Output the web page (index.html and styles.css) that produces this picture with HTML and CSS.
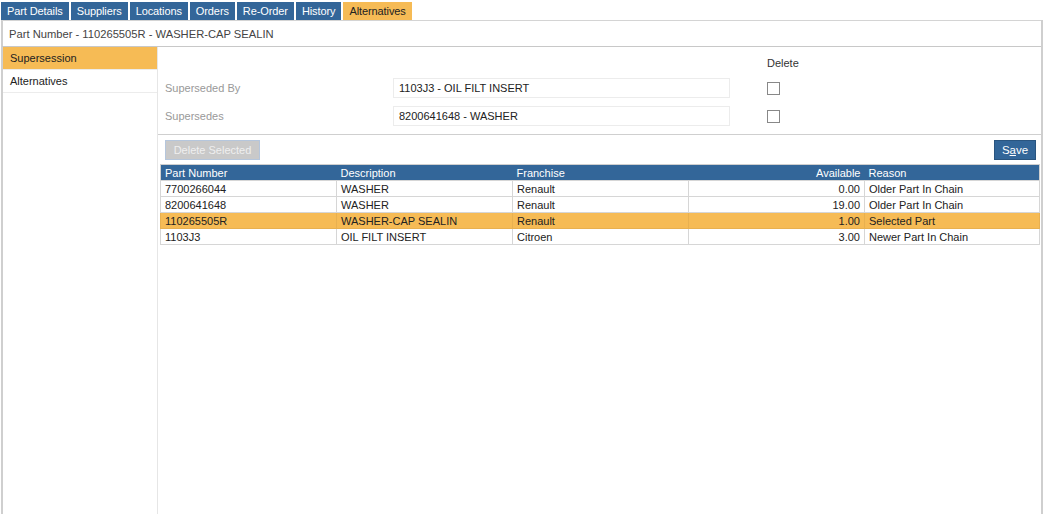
FILE: index.html
```html
<!DOCTYPE html>
<html lang="en">
<head>
  <meta charset="UTF-8" />
  <title>Part Alternatives</title>
  <link rel="stylesheet" href="styles.css">
</head>
<body>
  <div class="page">
    <ul class="tabs">
      <li class="tab">Part Details</li>
      <li class="tab">Suppliers</li>
      <li class="tab">Locations</li>
      <li class="tab">Orders</li>
      <li class="tab">Re-Order</li>
      <li class="tab">History</li>
      <li class="tab active">Alternatives</li>
    </ul>

    <div class="panel">
      <div class="title">Part Number - 110265505R - WASHER-CAP SEALIN</div>

      <div class="body">
        <ul class="side">
          <li class="side-item active">Supersession</li>
          <li class="side-item">Alternatives</li>
        </ul>

        <div class="content">
          <div class="form">
            <span></span>
            <span></span>
            <span class="head">Delete</span>

            <label class="label">Superseded By</label>
            <div class="field">1103J3 - OIL FILT INSERT</div>
            <span class="check"></span>

            <label class="label">Supersedes</label>
            <div class="field">8200641648 - WASHER</div>
            <span class="check"></span>
          </div>

          <div class="toolbar">
            <button class="btn disabled">Delete Selected</button>
            <button class="btn primary">S<u>a</u>ve</button>
          </div>

          <table class="grid">
            <thead>
              <tr>
                <th>Part Number</th>
                <th>Description</th>
                <th>Franchise</th>
                <th class="num">Available</th>
                <th>Reason</th>
              </tr>
            </thead>
            <tbody>
              <tr>
                <td>7700266044</td>
                <td>WASHER</td>
                <td>Renault</td>
                <td class="num">0.00</td>
                <td>Older Part In Chain</td>
              </tr>
              <tr>
                <td>8200641648</td>
                <td>WASHER</td>
                <td>Renault</td>
                <td class="num">19.00</td>
                <td>Older Part In Chain</td>
              </tr>
              <tr class="selected">
                <td>110265505R</td>
                <td>WASHER-CAP SEALIN</td>
                <td>Renault</td>
                <td class="num">1.00</td>
                <td>Selected Part</td>
              </tr>
              <tr>
                <td>1103J3</td>
                <td>OIL FILT INSERT</td>
                <td>Citroen</td>
                <td class="num">3.00</td>
                <td>Newer Part In Chain</td>
              </tr>
            </tbody>
          </table>
        </div>
      </div>
    </div>
  </div>
</body>
</html>
```

FILE: styles.css
```css
* {
  box-sizing: border-box;
  margin: 0;
  padding: 0;
}

html, body {
  height: 100%;
}

body {
  background: white;
  font-family: 'Liberation Sans', Arial, sans-serif;
  font-size: 11px;
  color: #222;
  overflow: hidden;
}

.page {
  display: flex;
  flex-direction: column;
  height: 100%;
  width: 1043px;
  padding: 2px 0 0 1px;
}

/* tabs */
.tabs {
  display: flex;
  list-style: none;
  gap: 2px;
}

.tab {
  height: 18px;
  line-height: 18px;
  padding: 0 6px;
  background: #336699;
  color: white;
  font-size: 11px;
  letter-spacing: -0.1px;
}

.tab.active {
  background: #f6bb55;
  color: #222;
}

/* panel */
.panel {
  flex: 1;
  display: flex;
  flex-direction: column;
  border-left: 2px solid #cfcfcf;
  border-right: 2px solid #cfcfcf;
}

.title {
  height: 27px;
  line-height: 26px;
  padding-left: 7px;
  border-top: 1px solid #d4d4d4;
  border-bottom: 1px solid #c8c8c8;
  font-size: 11.2px;
  color: #444;
  margin-left: -1px;
}

.body {
  flex: 1;
  display: flex;
}

.side {
  width: 155px;
  list-style: none;
  border-right: 1px solid #e6e6e6;
}

.side-item {
  height: 23px;
  line-height: 22px;
  padding-left: 7px;
  border-bottom: 1px solid #ececec;
}

.side-item.active {
  background: #f6bb55;
}

.content {
  flex: 1;
}

/* supersession form */
.form {
  display: grid;
  grid-template-columns: 228px 374px 40px;
  align-items: center;
  row-gap: 8px;
  padding: 9px 0 8px 7px;
  border-bottom: 1px solid #cfcfcf;
}

.head {
  line-height: 14px;
  color: #333;
}

.label {
  color: #999;
}

.field {
  grid-column: 2;
  width: 337px;
  height: 20px;
  line-height: 19px;
  padding-left: 5px;
  border: 1px solid #ececec;
  color: #222;
}

.check {
  width: 13px;
  height: 13px;
  border: 1px solid #888;
  background: white;
}

/* toolbar */
.toolbar {
  display: flex;
  justify-content: space-between;
  padding: 5px 5px 4px 7px;
}

.btn {
  height: 20px;
  padding: 0;
  border: 1px solid transparent;
  font-family: inherit;
  font-size: 11px;
  white-space: nowrap;
}

.btn.disabled {
  width: 95px;
  background: #c9c9c9;
  border-color: #b5c6dc;
  color: #efefef;
}

.btn.primary {
  width: 42px;
  background: #336699;
  border-color: #2a5580;
  color: white;
  font-size: 11.5px;
}

/* table */
.grid {
  width: 880px;
  margin-left: 2px;
  border-collapse: collapse;
  border: 1px solid #cfcfcf;
  table-layout: fixed;
}

.grid th {
  height: 16px;
  line-height: 14px;
  background: #336699;
  color: white;
  font-weight: normal;
  text-align: left;
  padding: 1px 4px 0;
}

.grid th:nth-child(1),
.grid th:nth-child(2),
.grid th:nth-child(3),
.grid th:nth-child(4) {
  width: 176px;
}

.grid td {
  height: 16px;
  line-height: 14px;
  padding: 0 4px;
  border: 1px solid #d6d6d6;
  white-space: nowrap;
}

.grid .num {
  text-align: right;
}

.grid tr.selected td {
  background: #f6bb55;
  border-color: #e8b050;
}
```
